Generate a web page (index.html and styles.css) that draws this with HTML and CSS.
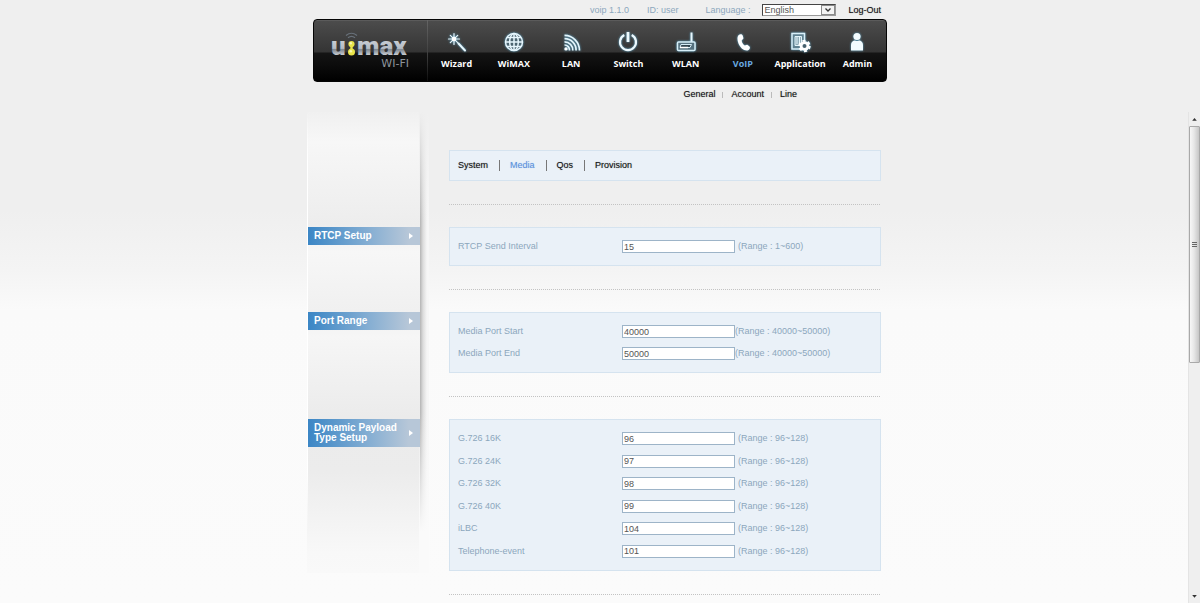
FILE: index.html
```html
<!DOCTYPE html>
<html lang="en">
<head>
<meta charset="utf-8">
<title>U:MAX Wi-Fi - VoIP Media</title>
<link rel="stylesheet" href="styles.css">
</head>
<body>
<header class="top">
  <div class="utility">
    <span class="version">voip 1.1.0</span>
    <span class="user">ID: user</span>
    <label class="lang-label" for="lang">Language :</label>
    <span class="select-wrap">
      <select id="lang" class="lang"><option>English</option><option>Korean</option></select>
      <svg class="select-arrow" viewBox="0 0 14 10" aria-hidden="true"><rect x=".5" y=".5" width="13" height="9" fill="#f2f2f2" stroke="#8a8a8a"/><path d="M4.500 3.500 7 6l2.500-2.500" fill="none" stroke="#333" stroke-width="1.300"/></svg>
    </span>
    <a class="logout" href="#logout">Log-Out</a>
  </div>
  <div class="bar">
    <a class="logo" href="#home" aria-label="U:MAX Wi-Fi">
      <svg viewBox="0 0 114 62" width="114" height="62">
        <defs>
          <linearGradient id="metal" x1="0" y1="0" x2="0" y2="1">
            <stop offset=".3" stop-color="#c9ced4"/><stop offset=".58" stop-color="#b4bbc4"/><stop offset=".62" stop-color="#7f8791"/><stop offset=".8" stop-color="#c8ccd1"/>
          </linearGradient>
        </defs>
        <text class="logo-main" x="17" y="35">u</text>
        <text class="logo-main" x="43" y="35">max</text>
        <text class="logo-sub" x="95" y="47" text-anchor="end">WI-FI</text>
        <g fill="none" stroke="#68717a" stroke-width="1.200">
          <path d="M32 15.500q5.500-4.500 11 0"/><path d="M34 17.800q3.500-3 7 0"/>
        </g>
        <g fill="#e8e44a"><circle cx="37.500" cy="24" r="3.100"/><circle cx="37.500" cy="32" r="3.500"/><path d="M36.300 26h2.400v5h-2.400z"/></g>
        <g fill="#fafab4"><circle cx="36.800" cy="23.300" r="1.200"/><circle cx="36.800" cy="31.300" r="1.300"/></g>
      </svg>
    </a>
    <nav class="menu" aria-label="Main">
      <a href="#wizard">
        <svg class="icon" viewBox="0 0 22 22"><g stroke="#e9f7fd" fill="none" stroke-linecap="round"><path d="M8 2.500v11M2.500 8h11M4.300 4.300l7.400 7.400M4.300 11.700l7.400-7.400" stroke-width="1.200"/><path d="M12.500 12.500l6.500 7" stroke-width="2"/></g><circle cx="8" cy="8" r="2.300" fill="#fff"/></svg>
        <span>Wizard</span></a>
      <a href="#wimax">
        <svg class="icon" viewBox="0 0 22 22"><circle cx="11" cy="11" r="8.500" fill="#4b6470"/><g stroke="#e6f6fd" fill="none" stroke-width="1.500"><circle cx="11" cy="11" r="8.500"/><ellipse cx="11" cy="11" rx="4.300" ry="8.500"/><path d="M11 2.500v17M2.500 11h17M4 6.500h14M4 15.500h14"/></g></svg>
        <span>WiMAX</span></a>
      <a href="#lan">
        <svg class="icon" viewBox="0 0 22 22"><g stroke="#e4f5fc" fill="none" stroke-width="1.700"><path d="M4.500 14a5 5 0 0 1 5 5.500M4.500 10.800a8.300 8.300 0 0 1 8.300 8.700M4.500 7.600a11.500 11.500 0 0 1 11.600 11.900M4.500 4.400a15 15 0 0 1 15 15.100"/></g><circle cx="6" cy="17.900" r="1.700" fill="#fff"/></svg>
        <span>LAN</span></a>
      <a href="#switch">
        <svg class="icon" viewBox="0 0 22 22"><g stroke="#edf9fe" fill="none"><path d="M7.300 4A8 8 0 1 0 14.700 4" stroke-width="2.200"/><path d="M11 1v10" stroke-width="2.800"/></g></svg>
        <span>Switch</span></a>
      <a href="#wlan">
        <svg class="icon" viewBox="0 0 22 22"><path d="M16.500 1.500V11" stroke="#e9f7fd" stroke-width="2"/><rect x="2.500" y="11" width="17.500" height="8.500" rx="1" fill="#54707e" stroke="#d6eef8" stroke-width="1.500"/><path d="M6 13.500h10.500l-1.500 3H5z" fill="#314550" stroke="#d6eef8"/><path d="M5 16.500h8" stroke="#fff" stroke-width="1.500"/></svg>
        <span>WLAN</span></a>
      <a class="current" href="#voip">
        <svg class="icon" viewBox="0 0 22 22"><path d="M6.500 4.200C8 3 10 3 10.700 4.500l.7 2.600c.1 1.100-1.600 1.600-1.700 2.600.2 1.900 1.600 3.900 3.100 4.700.9.200 1.800-1 2.800-.5l1.900 1.700c1 1.100.2 3.300-1.900 3.900-3.800.6-7.500-2.900-9.200-7.200-1.100-3-1.400-6.300.1-8.100z" fill="#fff"/></svg>
        <span>VoIP</span></a>
      <a href="#application">
        <svg class="icon" viewBox="0 0 22 22"><rect x="3" y="2.500" width="12.500" height="15.500" fill="#5f8191" stroke="#d9f0fa" stroke-width="1.500"/><path d="M6 5.500h6.500v9H6z" fill="#8fabb7" stroke="#e2f4fb"/><path d="M8 6v7M10.500 6v6" stroke="#e2f4fb"/><circle cx="15.500" cy="15" r="4.800" fill="#fff"/><circle cx="15.500" cy="15" r="5.200" fill="none" stroke="#fff" stroke-width="2" stroke-dasharray="3 2.450"/><circle cx="15.500" cy="15" r="2" fill="#47616e"/></svg>
        <span>Application</span></a>
      <a href="#admin">
        <svg class="icon" viewBox="0 0 22 22"><g fill="#f3fbfe"><circle cx="11" cy="5.500" r="3.600"/><path d="M5 19.500V14c0-3 2-4.500 4-4.500 1.300.7 2.700.7 4 0 2 0 4 1.500 4 4.500v5.500z"/></g></svg>
        <span>Admin</span></a>
    </nav>
  </div>
  <nav class="submenu" aria-label="VoIP">
    <a href="#general">General</a><a href="#account">Account</a><a href="#line">Line</a>
  </nav>
</header>

<div class="viewport">
  <main class="page">
    <div class="content">
      <nav class="tabs" aria-label="VoIP general">
        <a href="#system">System</a><a class="active" href="#media">Media</a><a href="#qos">Qos</a><a href="#provision">Provision</a>
      </nav>

      <section class="group">
        <h2>RTCP Setup</h2>
        <div class="panel">
          <div class="row"><label for="rtcp">RTCP Send Interval</label><input id="rtcp" type="text" value="15"><span class="range">(Range : 1~600)</span></div>
        </div>
      </section>

      <section class="group">
        <h2>Port Range</h2>
        <div class="panel tight">
          <div class="row"><label for="pstart">Media Port Start</label><input id="pstart" type="text" value="40000"><span class="range">(Range : 40000~50000)</span></div>
          <div class="row"><label for="pend">Media Port End</label><input id="pend" type="text" value="50000"><span class="range">(Range : 40000~50000)</span></div>
        </div>
      </section>

      <section class="group">
        <h2>Dynamic Payload Type Setup</h2>
        <div class="panel payload">
          <div class="row"><label for="g16">G.726 16K</label><input id="g16" type="text" value="96"><span class="range">(Range : 96~128)</span></div>
          <div class="row"><label for="g24">G.726 24K</label><input id="g24" type="text" value="97"><span class="range">(Range : 96~128)</span></div>
          <div class="row"><label for="g32">G.726 32K</label><input id="g32" type="text" value="98"><span class="range">(Range : 96~128)</span></div>
          <div class="row"><label for="g40">G.726 40K</label><input id="g40" type="text" value="99"><span class="range">(Range : 96~128)</span></div>
          <div class="row"><label for="ilbc">iLBC</label><input id="ilbc" type="text" value="104"><span class="range">(Range : 96~128)</span></div>
          <div class="row"><label for="tel">Telephone-event</label><input id="tel" type="text" value="101"><span class="range">(Range : 96~128)</span></div>
        </div>
      </section>
      <hr class="rule">
    </div>
  </main>
  <div class="scrollbar" aria-hidden="true">
    <svg viewBox="0 0 12 14"><path d="M3.500 9 6 6l2.500 3z" fill="#333"/></svg>
    <div class="thumb"><i></i><i></i><i></i></div>
    <svg class="down" viewBox="0 0 12 14"><path d="M3.500 6 6 9l2.500-3z" fill="#333"/></svg>
  </div>
</div>
</body>
</html>
```

FILE: styles.css
```css
* { box-sizing: border-box; }

body {
  margin: 0;
  height: 100vh;
  display: flex;
  flex-direction: column;
  overflow: hidden;
  background: linear-gradient(#efefef 0, #efefef 210px, #f4f4f4 270px, #fafafa 310px, #fbfbfb 100%);
  font: 9px/11px "Liberation Sans", Arial, sans-serif;
  color: #8ca7bd;
}

a { color: #111; text-decoration: none; }

.top {
  width: 574px;
  max-width: 100%;
  margin: 0 auto;
}

.utility {
  height: 19px;
  padding: 1px 6px 0 0;
  display: flex;
  align-items: center;
  justify-content: flex-end;
}

.version { margin-right: 18px; }
.user { margin-right: 27px; }
.lang-label { margin-right: 12px; }

.select-wrap {
  display: grid;
  width: 74px;
  margin-right: 12px;
}

.lang {
  grid-area: 1 / 1;
  height: 12px;
  padding: 0 0 0 1px;
  appearance: none;
  border: 1px solid #999;
  border-top-color: #444;
  border-left-color: #444;
  border-radius: 0;
  background: #fff;
  font: inherit;
  line-height: 10px;
  color: #555;
}

.select-arrow {
  grid-area: 1 / 1;
  justify-self: end;
  align-self: center;
  width: 14px;
  height: 10px;
  margin-right: 1px;
  pointer-events: none;
}

.logout, .submenu a, .tabs a { text-shadow: 0 0 1px rgba(0, 0, 0, .4); }

.bar {
  display: flex;
  height: 63px;
  border: 1px solid #050505;
  border-radius: 4px;
  background: linear-gradient(#6a6a6a 0, #4c4c4c 1px, #343434 32px, #141414 33px, #0c0c0c 45px, #000 100%);
}

.logo {
  flex: none;
  width: 114px;
  border-right: 1px solid;
  border-image: linear-gradient(#666, #3c3c3c 60%, #0c0c0c) 1;
}

.logo svg { display: block; }
.logo-main { font: 900 26px Roboto, sans-serif; fill: url(#metal); }
.logo-sub { font: 11px "DejaVu Sans", sans-serif; fill: #8d949c; }

.menu {
  flex: 1;
  display: grid;
  grid-template-columns: repeat(8, 1fr);
}

.menu a {
  display: flex;
  flex-direction: column;
  align-items: center;
  gap: 5px;
  padding-top: 11px;
  color: #fff;
  font: bold 9px/12px "Open Sans", "Noto Sans", sans-serif;
}

.menu .current { color: #69a9e0; }

.icon {
  width: 22px;
  height: 22px;
  filter: drop-shadow(0 0 1px #5da5c6);
}

.submenu {
  display: flex;
  justify-content: flex-end;
  height: 30px;
  padding: 7px 90px 0 0;
}

.submenu a + a {
  margin-left: 7px;
  padding-left: 9px;
  background: linear-gradient(#bbb, #bbb) 0 3px / 1px 6px no-repeat;
}

.viewport {
  flex: 1;
  min-height: 0;
  display: flex;
}

.page {
  flex: 1;
  overflow: hidden;
}

.content {
  width: 574px;
  max-width: 100%;
  margin: 0 auto;
  padding-top: 38px;
  background:
    linear-gradient(#fff0 0, #fff 50px, #fff 360px, #fff0 420px) 0 0 / 1px 461px no-repeat,
    linear-gradient(#efefef 0, #efefef00 110px, #fafafa00 300px, #fafafa 420px) 112px 0 / 10px 461px no-repeat,
    linear-gradient(90deg, #b4b4b4, #dcdcdc 3px, #f6f6f6 7px, #f6f6f6) 113px 0 / 9px 461px no-repeat,
    linear-gradient(#f0f0f0, #f7f7f7 30px, #ededed 112px, #f7f7f7 140px, #f0f0f0 198px, #f6f6f6 225px, #ebebeb 305px, #ececec 360px, #f8f8f8 440px, #f9f9f9) 0 0 / 113px 461px no-repeat;
}

.tabs {
  display: flex;
  margin-left: 142px;
  padding: 9px 8px;
  border: 1px solid #d5e3ef;
  background: #eaf1f8;
}

.tabs a + a {
  margin-left: 11px;
  padding-left: 11px;
  background: linear-gradient(#777, #777) 0 0 / 1px 11px no-repeat;
}

.tabs .active { color: #5a92dc; text-shadow: 0 0 1px #5a92dc66; }

.group {
  display: grid;
  grid-template-columns: 112px 1fr;
  column-gap: 29px;
  align-items: start;
  padding-left: 1px;
  margin-top: 23px;
}

.group::before, .rule {
  content: "";
  height: 1px;
  background: repeating-linear-gradient(90deg, #c3c3c3 0 1px, transparent 1px 2px);
}

.group::before {
  grid-column: 2;
  margin-bottom: 22px;
}

.rule {
  margin: 23px 0 0 142px;
  border: 0;
}

.group h2 {
  grid-column: 1;
  display: flex;
  align-items: center;
  margin: 0;
  padding: 4px 18px 4px 6px;
  background: linear-gradient(90deg, #3b86c5, #7fabd2 50%, #b7c7d8 90%);
  font: bold 10px/10px "Liberation Sans", Arial, sans-serif;
  color: #fff;
}

.group h2::after {
  content: "";
  flex: none;
  margin-left: auto;
  margin-right: -14px;
  border: 3px solid transparent;
  border-left: 4px solid #fff;
}

.panel {
  display: grid;
  align-content: space-between;
  gap: 9px;
  padding: 12px 8px;
  border: 1px solid #d5e3ef;
  background: #eaf1f8;
}

.panel.payload { min-height: 152px; }

.row {
  display: grid;
  grid-template-columns: 164px 113px 1fr;
  align-items: center;
  height: 13px;
}

.range { padding-left: 3px; }
.tight .range { padding-left: 0; }

.row input {
  width: 100%;
  height: 13px;
  padding: 0 1px;
  border: 1px solid #9db4c8;
  border-radius: 0;
  background: #fff;
  font: inherit;
  line-height: 11px;
  color: #555;
}

.scrollbar {
  flex: none;
  width: 12px;
  display: flex;
  flex-direction: column;
  border-left: 1px solid #e4e4e4;
  background: #efefef;
}

.scrollbar svg { flex: none; height: 14px; }
.scrollbar .down { margin-top: auto; }

.thumb {
  flex: 0 0 237px;
  display: flex;
  flex-direction: column;
  align-items: center;
  justify-content: center;
  gap: 1px;
  border: 1px solid #a9a9a9;
  border-radius: 1px;
  background: linear-gradient(90deg, #f7f7f7, #e6e6e6 45%, #c6c6c6);
}

.thumb i { width: 5px; height: 1px; background: #666; }
```
